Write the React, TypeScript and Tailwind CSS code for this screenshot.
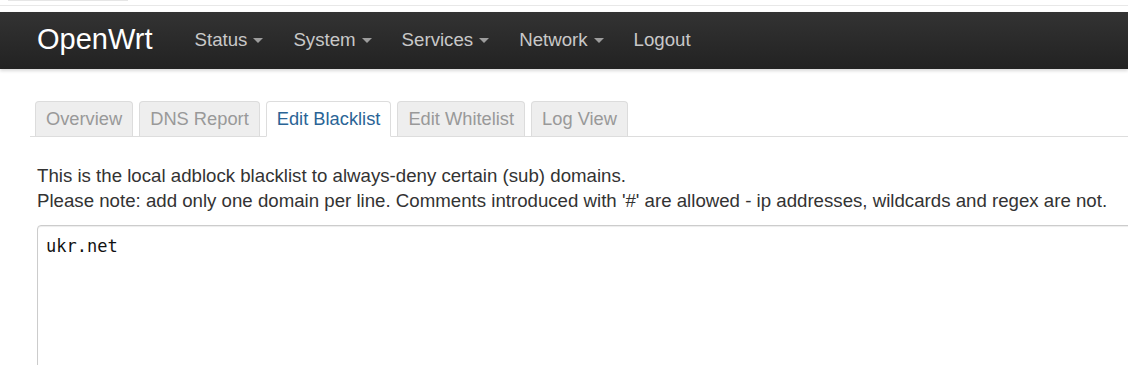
const menu = [
  { label: "Status", caret: true },
  { label: "System", caret: true },
  { label: "Services", caret: true },
  { label: "Network", caret: true },
  { label: "Logout", caret: false },
];

const tabs = ["Overview", "DNS Report", "Edit Blacklist", "Edit Whitelist", "Log View"];
const active = "Edit Blacklist";

const Caret = () => (
  <span className="ml-[6px] inline-block h-0 w-0 border-x-[5px] border-t-[5px] border-x-transparent border-t-[#9d9d9d] align-middle" />
);

export default function App() {
  return (
    <div className="h-[365px] w-[1128px] overflow-hidden bg-white font-['Liberation_Sans',Arial,sans-serif] text-[#333]">
      {/* browser strip above the page */}
      <div className="h-[12px] bg-white">
        <div className="ml-[8px] h-[1px] w-[120px] bg-[#e6e6e6]" />
        <div className="mt-[4px] h-[1px] bg-[#e8e8e8]" />
      </div>

      <header className="flex h-[57px] items-center bg-gradient-to-b from-[#333333] to-[#222222] shadow-[0_2px_3px_rgba(0,0,0,0.15)]">
        <span className="ml-[37px] mr-[27px] -mt-[2px] text-[29px] leading-none text-white">OpenWrt</span>
        <nav className="-mt-[1px] flex items-center">
          {menu.map((m) => (
            <a key={m.label} className="flex items-center px-[15px] text-[18.67px] text-[#c8c8c8]">
              {m.label}
              {m.caret && <Caret />}
            </a>
          ))}
        </nav>
      </header>

      <main className="pt-[32px]">
        <ul className="ml-[30px] flex gap-[6px] border-b border-[#ddd] pl-[5px]">
          {tabs.map((t) => (
            <li
              key={t}
              className={
                t === active
                  ? "-mb-px rounded-t-[4px] border border-b-white border-[#ddd] bg-white px-[10px] pb-[5px] pt-[5px] text-[18.3px] leading-[24px] text-[#2a6496]"
                  : "rounded-t-[4px] border border-b-0 border-[#dcdcdc] bg-[#eeeeee] px-[10px] pb-[5px] pt-[5px] text-[18.3px] leading-[24px] text-[#999]"
              }
            >
              {t}
            </li>
          ))}
        </ul>

        <div className="ml-[37px] mt-[26px] text-[18.67px] leading-[25px] text-[#333]">
          <p>This is the local adblock blacklist to always-deny certain (sub) domains.</p>
          <p>Please note: add only one domain per line. Comments introduced with '#' are allowed - ip addresses, wildcards and regex are not.</p>
        </div>

        <textarea
          readOnly
          defaultValue="ukr.net"
          className="ml-[37px] mt-[12px] h-[300px] w-[1200px] resize-none rounded-[4px] border border-[#ccc] px-[8px] pb-[6px] pt-[8px] font-['DejaVu_Sans_Mono',monospace] text-[17px] leading-[24px] text-[#111] shadow-[inset_0_1px_1px_rgba(0,0,0,0.075)] outline-none"
        />
      </main>
    </div>
  );
}
